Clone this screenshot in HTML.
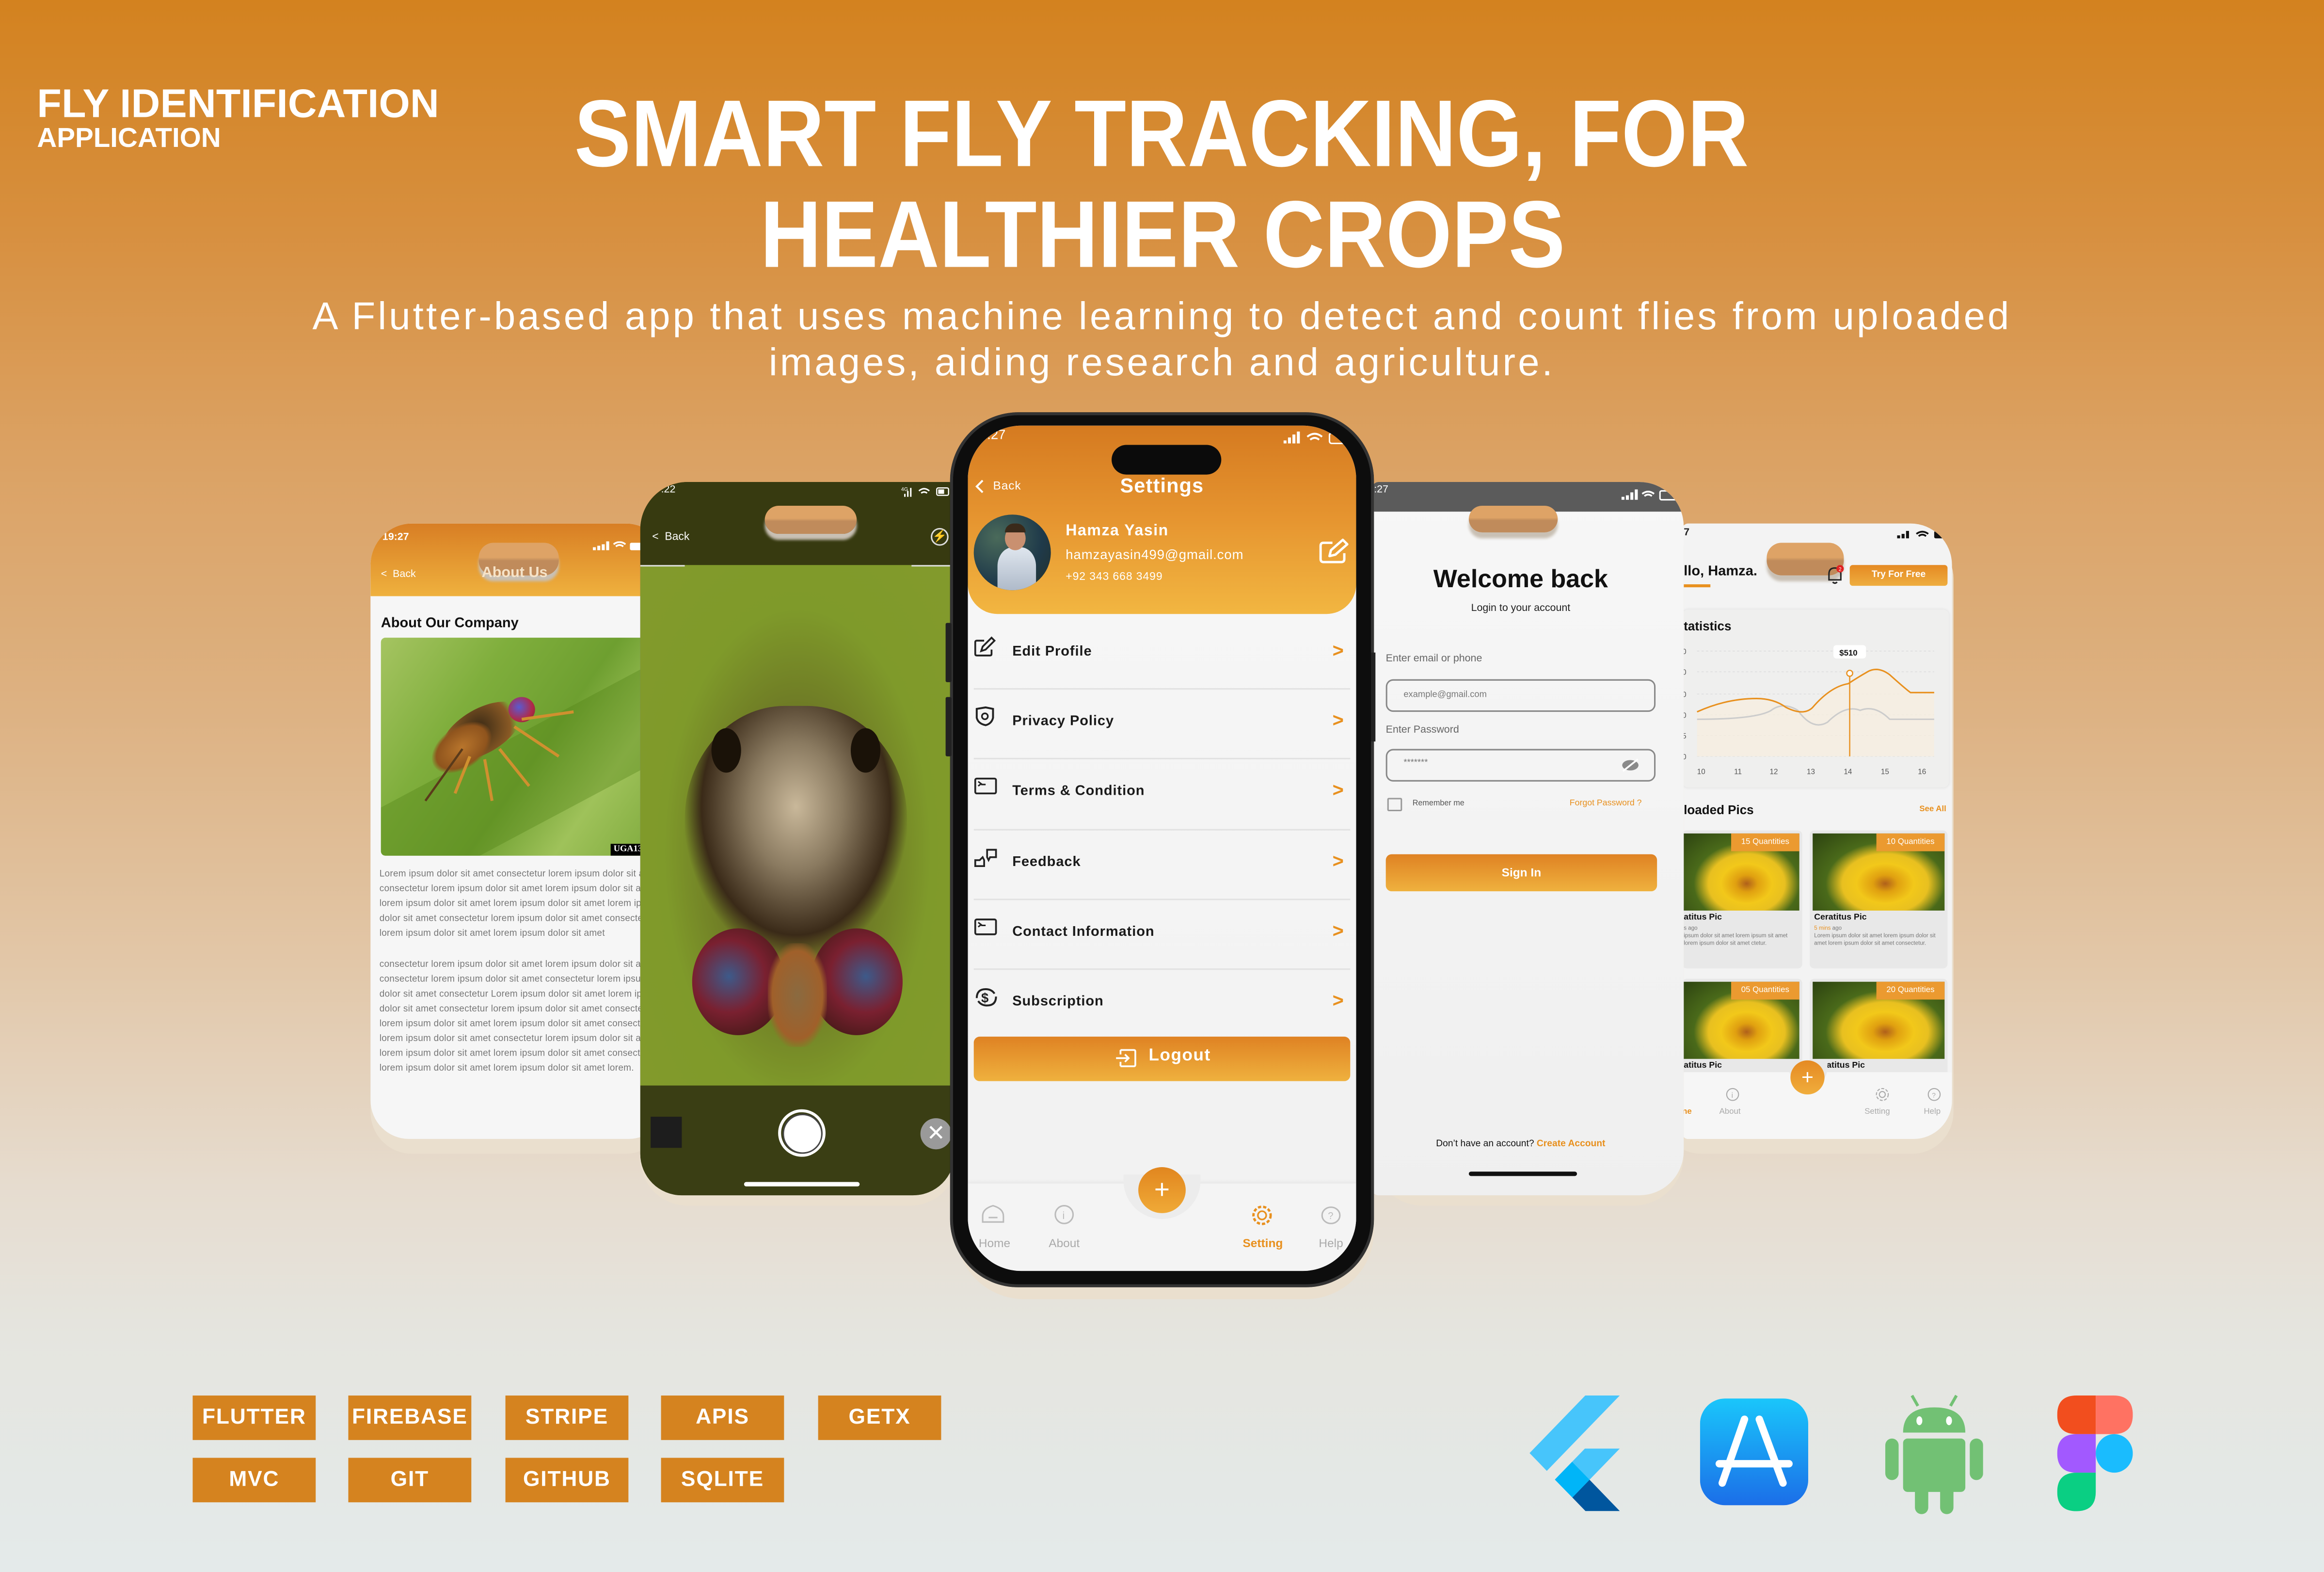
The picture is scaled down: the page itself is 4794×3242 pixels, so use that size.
<!DOCTYPE html>
<html><head><meta charset="utf-8">
<style>
*{margin:0;padding:0;box-sizing:border-box}
html,body{width:4794px;height:3242px;overflow:hidden;background:#e5e9e7}
#w{position:absolute;left:0;top:0;width:1568px;height:1060px;transform:scale(3.0574,3.0585);transform-origin:0 0;
background:linear-gradient(180deg,#d3821f 0px,#d78f3e 150px,#dba162 300px,#ddb283 480px,#e2c7a8 650px,#e6dccf 800px,#e5e5df 900px,#e4eaea 1060px);
font-family:"Liberation Sans",sans-serif;overflow:hidden}
.a{position:absolute}
.t{color:#fff;font-weight:bold;white-space:nowrap}
.badge{position:absolute;width:83px;height:30px;background:#d5831f;color:#fff;font-weight:bold;font-size:14.5px;letter-spacing:.6px;text-align:center;line-height:30px}
.row{position:absolute;left:0;width:262px;height:47px}
.row .lab{position:absolute;left:30px;top:17px;font-size:9.5px;font-weight:bold;color:#1a1a1a;letter-spacing:.3px}
.row .chev{position:absolute;left:246px;top:14px;color:#e8901e;font-size:13px;font-weight:bold}
.row .ic{position:absolute;left:4px;top:12px}
.sep{position:absolute;left:4px;width:254px;height:1px;background:#e2e2e2}
.lorem{font-size:6.2px;color:#777;line-height:10.1px;letter-spacing:.1px}
.nav{position:absolute;font-size:8px;color:#aaa;text-align:center}
.pill{position:absolute;border-radius:10px;background:linear-gradient(180deg,#dea366 0,#dea366 45%,#c08b5b 55%,#c08b5b 100%);box-shadow:0 4px 2px #c9c0b4}
</style></head><body><div id="w">

<!-- headings -->
<div class="a t" style="left:25px;top:55px;font-size:27px;letter-spacing:.1px">FLY IDENTIFICATION</div>
<div class="a t" style="left:25px;top:82px;font-size:18.5px">APPLICATION</div>
<div class="a" style="left:0;top:53px;width:1568px;text-align:center">
 <span class="t" style="display:inline-block;font-size:64px;transform:scaleX(.895);letter-spacing:0px">SMART FLY TRACKING, FOR</span></div>
<div class="a" style="left:0;top:121px;width:1568px;text-align:center">
 <span class="t" style="display:inline-block;font-size:64px;transform:scaleX(.895)">HEALTHIER CROPS</span></div>
<div class="a" style="left:0;top:198px;width:1568px;text-align:center;color:#fff;font-size:26px;line-height:31px;letter-spacing:1.7px">A Flutter-based app that uses machine learning to detect and count flies from uploaded<br>images, aiding research and agriculture.</div>

<!-- ============ About phone ============ -->
<div class="a" style="left:250px;top:362px;width:200px;height:416px;background:#eadfce;border-radius:28px"></div>
<div class="a" style="left:250px;top:353px;width:200px;height:415px;border-radius:28px 28px 26px 26px;overflow:hidden;background:#f6f6f6">
 <div class="a" style="left:0;top:0;width:200px;height:49px;background:linear-gradient(180deg,#d87e24,#efb13e)"></div>
 <div class="a t" style="left:8px;top:6px;font-size:7px">19:27</div>
 <div class="a" style="left:150px;top:6px;width:35px;height:6px"><svg width="35" height="7"><rect x="0" y="4" width="2" height="2" fill="#fff"/><rect x="3" y="3" width="2" height="3" fill="#fff"/><rect x="6" y="2" width="2" height="4" fill="#fff"/><rect x="9" y="0" width="2" height="6" fill="#fff"/><path d="M14 2 Q18 -1 22 2 M15.5 3.5 Q18 1.5 20.5 3.5" stroke="#fff" fill="none" stroke-width="1.2"/><rect x="25" y="1" width="9" height="5" rx="1" fill="#fff"/></svg></div>
 <div class="pill" style="left:73px;top:13px;width:54px;height:22px"></div>
 <div class="a t" style="left:7px;top:31px;font-size:7px;font-weight:normal">&lt;&nbsp; Back</div>
 <div class="a t" style="left:75px;top:28px;font-size:10px;color:#f6e3c8">About Us</div>
 <div class="a" style="left:7px;top:62px;font-size:9.5px;font-weight:bold;color:#111">About Our Company</div>
 <div class="a" style="left:7px;top:77px;width:190px;height:147px;border-radius:3px;overflow:hidden;background:linear-gradient(125deg,#a5c461 0%,#7fae3c 30%,#6e9f30 55%,#9fc25a 75%,#7ca83a 100%)">
  <div class="a" style="left:-20px;top:60px;width:260px;height:60px;background:rgba(80,130,20,.35);transform:rotate(-28deg)"></div>
  <div class="a" style="left:38px;top:48px;width:60px;height:30px;border-radius:50%;background:radial-gradient(circle at 50% 40%,#3a2a15,#8a5a25 60%,transparent 72%);transform:rotate(-30deg)"></div>
  <div class="a" style="left:32px;top:60px;width:45px;height:28px;border-radius:50%;background:radial-gradient(#b8752c,#8f541d 60%,transparent 72%);transform:rotate(-35deg)"></div>
  <div class="a" style="left:86px;top:40px;width:18px;height:17px;border-radius:50%;background:radial-gradient(circle at 40% 40%,#5a5ad0,#b02a4a 60%,#7a2a2a)"></div>
  <svg class="a" style="left:0;top:0" width="190" height="147"><path d="M60 80 L50 105 M70 82 L75 110 M80 75 L100 100 M95 55 L130 50 M90 60 L120 80" stroke="#d0902f" stroke-width="2" fill="none"/><path d="M30 110 L55 75" stroke="#5a3a1a" stroke-width="1.5"/></svg>
  <div class="a" style="left:155px;top:139px;width:35px;height:8px;background:#000;color:#fff;font-size:6px;font-family:'Liberation Serif',serif;font-weight:bold;padding-left:2px;line-height:8px">UGA13</div>
 </div>
 <div class="a lorem" style="left:6px;top:232px;width:192px">Lorem ipsum dolor sit amet consectetur lorem ipsum dolor sit amet consectetur lorem ipsum dolor sit amet lorem ipsum dolor sit amet lorem ipsum dolor sit amet lorem ipsum dolor sit amet lorem ipsum dolor sit amet consectetur lorem ipsum dolor sit amet consectetur lorem ipsum dolor sit amet lorem ipsum dolor sit amet<br><br>consectetur lorem ipsum dolor sit amet lorem ipsum dolor sit amet consectetur lorem ipsum dolor sit amet consectetur lorem ipsum dolor sit amet consectetur Lorem ipsum dolor sit amet lorem ipsum dolor sit amet consectetur lorem ipsum dolor sit amet consectetur lorem ipsum dolor sit amet lorem ipsum dolor sit amet consectetur lorem ipsum dolor sit amet consectetur lorem ipsum dolor sit amet lorem ipsum dolor sit amet lorem ipsum dolor sit amet consectetur lorem ipsum dolor sit amet lorem ipsum dolor sit amet lorem.</div>
</div>

<!-- ============ Camera phone ============ -->
<div class="a" style="left:432px;top:335px;width:214px;height:478px;background:#eadfce;border-radius:32px"></div>
<div class="a" style="left:432px;top:325px;width:212px;height:481px;border-radius:32px 4px 28px 28px;overflow:hidden;background:#3a3d12">
 <div class="a" style="left:0;top:0;width:212px;height:56px;background:#373a10"></div>
 <div class="a t" style="left:14px;top:2px;font-size:7px;font-weight:normal">.22</div>
 <svg class="a" style="left:176px;top:2px" width="34" height="9"><text x="0" y="4" font-size="3.5" fill="#fff" font-family="Liberation Sans">4G</text><rect x="2" y="6" width="1" height="2" fill="#fff"/><rect x="4" y="4" width="1" height="4" fill="#fff"/><rect x="6" y="2" width="1" height="6" fill="#fff"/><path d="M12 4 Q15.5 1 19 4 M13.5 5.5 Q15.5 4 17.5 5.5" stroke="#fff" fill="none" stroke-width="1"/><rect x="24" y="2" width="8" height="5" rx="1" stroke="#fff" fill="none" stroke-width=".8"/><rect x="25" y="3" width="4" height="3" fill="#fff"/></svg>
 <div class="pill" style="left:84px;top:16px;width:62px;height:19px"></div>
 <div class="a t" style="left:8px;top:32px;font-size:7.5px;font-weight:normal">&lt;&nbsp; Back</div>
 <div class="a" style="left:196px;top:31px;width:12px;height:12px;border:1px solid #ddd;border-radius:50%;color:#fff;font-size:8px;line-height:10px;text-align:center">⚡</div>
 <div class="a" style="left:0;top:56px;width:212px;height:351px;background:radial-gradient(ellipse at 50% 55%,#8a6a30 0%,#6e7a25 35%,#7f9a2a 60%,#839a2c 100%)">
  <div class="a" style="left:30px;top:95px;width:150px;height:170px;border-radius:45%;background:radial-gradient(ellipse at 50% 40%,#c9b89a 0%,#8a7a60 30%,#3a2a18 60%,transparent 72%)"></div>
  <div class="a" style="left:48px;top:110px;width:20px;height:30px;border-radius:50%;background:#1a1208"></div>
  <div class="a" style="left:142px;top:110px;width:20px;height:30px;border-radius:50%;background:#1a1208"></div>
  <div class="a" style="left:35px;top:245px;width:62px;height:72px;border-radius:50%;background:radial-gradient(circle at 40% 45%,#3d5a8a 0%,#7a2030 45%,#4a1a1a 80%)"></div>
  <div class="a" style="left:115px;top:245px;width:62px;height:72px;border-radius:50%;background:radial-gradient(circle at 60% 45%,#3d5a8a 0%,#7a2030 45%,#4a1a1a 80%)"></div>
  <div class="a" style="left:86px;top:255px;width:40px;height:70px;border-radius:40%;background:radial-gradient(#8a6a40,#a0602a 60%,transparent 75%)"></div>
  <div class="a" style="left:0;top:0;width:30px;height:1px;background:#ddd"></div><div class="a" style="left:183px;top:0;width:29px;height:1px;background:#ddd"></div>
 </div>
 <div class="a" style="left:0;top:407px;width:212px;height:74px;background:#3a3e14"></div>
 <div class="a" style="left:7px;top:428px;width:21px;height:21px;background:#1d1d1d"></div>
 <div class="a" style="left:93px;top:423px;width:32px;height:32px;border:2.5px solid #fff;border-radius:50%"></div>
 <div class="a" style="left:95.5px;top:425.5px;width:27px;height:27px;border:1px solid #444;border-radius:50%;background:#fff"></div>
 <div class="a" style="left:189px;top:429px;width:21px;height:21px;border-radius:50%;background:#9a9a9a;color:#fff;text-align:center;font-size:15px;line-height:21px">✕</div>
 <div class="a" style="left:70px;top:472px;width:78px;height:2.5px;border-radius:2px;background:#fff"></div>
</div>

<!-- ============ Dashboard phone ============ -->
<div class="a" style="left:1120px;top:362px;width:198px;height:416px;background:#eadfce;border-radius:28px"></div>
<div class="a" style="left:1135px;top:353px;width:182px;height:415px;border-radius:4px 28px 26px 4px;overflow:hidden;background:#f3f3f3">
 <div class="a t" style="left:1px;top:3px;font-size:7px;color:#222">7</div>
 <svg class="a" style="left:145px;top:4px" width="35" height="7"><rect x="0" y="4" width="2" height="2" fill="#111"/><rect x="3" y="3" width="2" height="3" fill="#111"/><rect x="6" y="1" width="2" height="5" fill="#111"/><path d="M13 3 Q17 0 21 3 M14.5 4.5 Q17 2.5 19.5 4.5" stroke="#111" fill="none" stroke-width="1.2"/><rect x="25" y="1" width="9" height="5" rx="1" fill="#111"/></svg>
 <div class="pill" style="left:57px;top:13px;width:52px;height:22px"></div>
 <div class="a" style="left:1px;top:27px;font-size:9.5px;font-weight:bold;color:#111">llo, Hamza.</div>
 <div class="a" style="left:1px;top:41px;width:18px;height:1.5px;background:#e8901e"></div>
 <svg class="a" style="left:96px;top:28px" width="14" height="14"><path d="M3 10 L3 6 Q3 2 7 2 Q11 2 11 6 L11 10 Z M5.5 11.5 Q7 13 8.5 11.5" stroke="#222" fill="none" stroke-width="1"/><circle cx="10.5" cy="2.5" r="2.5" fill="#e02020"/><text x="9.5" y="4" font-size="3.5" fill="#fff">2</text></svg>
 <div class="a" style="left:113px;top:28px;width:66px;height:14px;border-radius:2px;background:linear-gradient(#e58a23,#eead3f);color:#fff;font-size:6.3px;font-weight:bold;text-align:center;line-height:14px">Try For Free</div>
 <div class="a" style="left:0;top:58px;width:180px;height:120px;background:#efefee;border-radius:4px;box-shadow:0 0 2px #ddd"></div>
 <div class="a" style="left:1px;top:64px;font-size:8.5px;font-weight:bold;color:#111">tatistics</div>
 <svg class="a" style="left:0;top:80px" width="182" height="100">
  <g font-size="5" fill="#555" font-family="Liberation Sans"><text x="0" y="8">0</text><text x="0" y="22">0</text><text x="0" y="37">0</text><text x="0" y="51">0</text><text x="0" y="65">5</text><text x="0" y="79">0</text>
  <text x="10" y="89">10</text><text x="35" y="89">11</text><text x="59" y="89">12</text><text x="84" y="89">13</text><text x="109" y="89">14</text><text x="134" y="89">15</text><text x="159" y="89">16</text></g>
  <g stroke="#ddd" stroke-dasharray="1.5 1.5" stroke-width=".5"><line x1="10" y1="6" x2="170" y2="6"/><line x1="10" y1="20" x2="170" y2="20"/><line x1="10" y1="35" x2="170" y2="35"/><line x1="10" y1="49" x2="170" y2="49"/><line x1="10" y1="63" x2="170" y2="63"/><line x1="10" y1="77" x2="170" y2="77"/></g>
  <path d="M10 47 Q30 38 50 38 Q62 38 70 44 Q82 50 88 44 Q100 30 112 28 Q118 24 125 20 Q132 16 140 22 Q150 31 154 34 L170 34 L170 77 L10 77 Z" fill="#f6ede0" opacity=".8"/>
  <path d="M10 52 Q50 52 60 46 Q68 40 78 46 Q88 60 98 54 Q110 42 120 46 Q130 42 140 52 L170 52" stroke="#ccc" fill="none" stroke-width="1"/>
  <path d="M10 47 Q30 38 50 38 Q62 38 70 44 Q82 50 88 44 Q100 30 112 28 Q118 24 125 20 Q132 16 140 22 Q150 31 154 34 L170 34" stroke="#e8901e" fill="none" stroke-width="1"/>
  <line x1="113" y1="21" x2="113" y2="77" stroke="#e8901e" stroke-width=".8"/><circle cx="113" cy="21" r="2" fill="#fff" stroke="#e8901e" stroke-width=".8"/>
  <rect x="102" y="2" width="22" height="9" rx="2" fill="#fff"/><text x="106" y="9" font-size="5.5" font-weight="bold" fill="#111" font-family="Liberation Sans">$510</text>
 </svg>
 <div class="a" style="left:1px;top:188px;font-size:8.5px;font-weight:bold;color:#111">loaded Pics</div>
 <div class="a" style="left:160px;top:190px;font-size:5.5px;color:#e8901e;font-weight:bold">See All</div>
 <div class="a" style="left:0;top:207px;width:81px;height:93px;background:#e8e8e8;border-radius:3px"></div>
 <div class="a" style="left:86px;top:207px;width:93px;height:93px;background:#e8e8e8;border-radius:3px"></div>
 <div class="a" style="left:0;top:307px;width:81px;height:70px;background:#e8e8e8;border-radius:3px"></div>
 <div class="a" style="left:86px;top:307px;width:93px;height:70px;background:#e8e8e8;border-radius:3px"></div>
 <div class="a" style="left:0;top:209px;width:79px;height:52px;background:radial-gradient(ellipse at 55% 65%,#b0601a 0,#e0a010 12%,#f2c81a 28%,#e8c020 42%,#4a6a1a 58%,#2c4210 100%)"></div>
 <div class="a" style="left:88px;top:209px;width:89px;height:52px;background:radial-gradient(ellipse at 55% 65%,#b0601a 0,#e0a010 12%,#f2c81a 28%,#e8c020 42%,#4a6a1a 58%,#2c4210 100%)"></div>
 <div class="a" style="left:0;top:309px;width:79px;height:52px;background:radial-gradient(ellipse at 55% 65%,#b0601a 0,#e0a010 12%,#f2c81a 28%,#e8c020 42%,#4a6a1a 58%,#2c4210 100%)"></div>
 <div class="a" style="left:88px;top:309px;width:89px;height:52px;background:radial-gradient(ellipse at 55% 65%,#b0601a 0,#e0a010 12%,#f2c81a 28%,#e8c020 42%,#4a6a1a 58%,#2c4210 100%)"></div>
 <div class="a" style="left:33px;top:209px;width:46px;height:12px;background:#eb9a30;color:#fff;font-size:5.5px;text-align:center;line-height:12px">15 Quantities</div>
 <div class="a" style="left:131px;top:209px;width:46px;height:12px;background:#eb9a30;color:#fff;font-size:5.5px;text-align:center;line-height:12px">10 Quantities</div>
 <div class="a" style="left:33px;top:309px;width:46px;height:12px;background:#eb9a30;color:#fff;font-size:5.5px;text-align:center;line-height:12px">05 Quantities</div>
 <div class="a" style="left:131px;top:309px;width:46px;height:12px;background:#eb9a30;color:#fff;font-size:5.5px;text-align:center;line-height:12px">20 Quantities</div>
 <div class="a" style="left:1px;top:263px;font-size:5.8px;font-weight:bold;color:#111">atitus Pic</div>
 <div class="a" style="left:89px;top:263px;font-size:5.8px;font-weight:bold;color:#111">Ceratitus Pic</div>
 <div class="a" style="left:1px;top:271px;font-size:3.8px;color:#777;line-height:4.8px;width:78px">s ago<br>ipsum dolor sit amet lorem ipsum sit amet lorem ipsum dolor sit amet ctetur.</div>
 <div class="a" style="left:89px;top:271px;font-size:3.8px;color:#777;line-height:4.8px;width:88px"><span style="color:#e8901e">5 mins</span> ago<br>Lorem ipsum dolor sit amet lorem ipsum dolor sit amet lorem ipsum dolor sit amet consectetur.</div>
 <div class="a" style="left:1px;top:363px;font-size:5.8px;font-weight:bold;color:#111">atitus Pic</div>
 <div class="a" style="left:92px;top:363px;font-size:5.8px;font-weight:bold;color:#111">eratitus Pic</div>
 <div class="a" style="left:0;top:370px;width:182px;height:45px;background:#f6f6f6"></div>
 <div class="a" style="left:72px;top:362px;width:26px;height:18px;border-radius:0 0 13px 13px;background:#e8e8e8"></div>
 <div class="a" style="left:73px;top:362px;width:23px;height:23px;border-radius:50%;background:linear-gradient(#e58a23,#f0ad3c);color:#fff;text-align:center;font-size:14px;line-height:22px">+</div>
 <svg class="a" style="left:29px;top:380px" width="10" height="10"><circle cx="5" cy="5" r="4" stroke="#aaa" fill="none" stroke-width=".7"/><text x="4.2" y="7.2" font-size="5" fill="#aaa">i</text></svg>
 <svg class="a" style="left:130px;top:380px" width="10" height="10"><circle cx="5" cy="5" r="2" stroke="#aaa" fill="none" stroke-width=".7"/><circle cx="5" cy="5" r="4" stroke="#aaa" fill="none" stroke-width=".7" stroke-dasharray="2 1"/></svg>
 <svg class="a" style="left:165px;top:380px" width="10" height="10"><circle cx="5" cy="5" r="4" stroke="#aaa" fill="none" stroke-width=".7"/><text x="3.5" y="7" font-size="4.5" fill="#aaa">?</text></svg>
 <div class="nav" style="left:0;top:394px;font-size:5.5px;color:#e8901e;font-weight:bold">ne</div>
 <div class="nav" style="left:25px;top:394px;font-size:5.5px">About</div>
 <div class="nav" style="left:123px;top:394px;font-size:5.5px">Setting</div>
 <div class="nav" style="left:163px;top:394px;font-size:5.5px">Help</div>
</div>

<!-- ============ Login phone ============ -->
<div class="a" style="left:926px;top:335px;width:210px;height:478px;background:#eadfce;border-radius:34px"></div>
<div class="a" style="left:921px;top:330px;width:8px;height:470px;background:#1a1a1a"></div>
<div class="a" style="left:926px;top:325px;width:210px;height:481px;border-radius:4px 30px 30px 4px;overflow:hidden;background:linear-gradient(180deg,#f7f7f7,#efefef)">
 <div class="a" style="left:0;top:0;width:210px;height:20px;background:#5b5b5b"></div>
 <div class="a t" style="left:1px;top:2px;font-size:7px;font-weight:normal">:27</div>
 <svg class="a" style="left:168px;top:5px" width="42" height="8"><rect x="0" y="5" width="2" height="2" fill="#fff"/><rect x="3" y="4" width="2" height="3" fill="#fff"/><rect x="6" y="2" width="2" height="5" fill="#fff"/><rect x="9" y="0" width="2" height="7" fill="#fff"/><path d="M14 3 Q18 0 22 3 M15.5 4.5 Q18 2.5 20.5 4.5" stroke="#fff" fill="none" stroke-width="1.2"/><rect x="26" y="1" width="14" height="6" rx="1" stroke="#fff" fill="none"/></svg>
 <div class="pill" style="left:65px;top:16px;width:60px;height:18px"></div>
 <div class="a" style="left:0;top:56px;width:200px;text-align:center;font-size:17px;font-weight:bold;color:#111">Welcome back</div>
 <div class="a" style="left:0;top:82px;width:200px;text-align:center;font-size:7px;color:#222">Login to your account</div>
 <div class="a" style="left:9px;top:116px;font-size:7px;color:#666">Enter email or phone</div>
 <div class="a" style="left:9px;top:133px;width:182px;height:22px;border:1px solid #888;border-radius:5px;font-size:6px;color:#777;padding:7px 0 0 11px">example@gmail.com</div>
 <div class="a" style="left:9px;top:164px;font-size:7px;color:#666">Enter Password</div>
 <div class="a" style="left:9px;top:180px;width:182px;height:22px;border:1px solid #888;border-radius:5px;font-size:6px;color:#777;padding:6px 0 0 11px">*******</div>
 <svg class="a" style="left:167px;top:186px" width="14" height="10"><ellipse cx="7" cy="5" rx="5.5" ry="3.5" fill="#8a8a8a"/><line x1="2" y1="9" x2="12" y2="1" stroke="#fff" stroke-width="1.2"/></svg>
 <div class="a" style="left:10px;top:213px;width:10px;height:9px;border:1px solid #999;border-radius:1px"></div>
 <div class="a" style="left:27px;top:214px;font-size:5.3px;color:#555">Remember me</div>
 <div class="a" style="left:133px;top:214px;font-size:5.8px;color:#e8901e">Forgot Password ?</div>
 <div class="a" style="left:9px;top:251px;width:183px;height:25px;border-radius:4px;background:linear-gradient(180deg,#df8223,#efb13e);color:#fff;font-size:8px;font-weight:bold;text-align:center;line-height:25px">Sign In</div>
 <div class="a" style="left:0;top:443px;width:200px;text-align:center;font-size:6.3px;color:#111">Don’t have an account? <b style="color:#e8901e">Create Account</b></div>
 <div class="a" style="left:65px;top:465px;width:73px;height:2.5px;border-radius:2px;background:#111"></div>
</div>

<!-- ============ Center phone ============ -->
<div class="a" style="left:645px;top:288px;width:282px;height:588px;background:#eadfce;border-radius:46px"></div>
<div class="a" style="left:641px;top:278px;width:286px;height:590px;background:#0d0d0d;border-radius:46px;box-shadow:inset 0 0 0 2px #333"></div>
<div class="a" style="left:638px;top:420px;width:4px;height:40px;background:#222;border-radius:1px"></div>
<div class="a" style="left:638px;top:470px;width:4px;height:40px;background:#222;border-radius:1px"></div>
<div class="a" style="left:925px;top:440px;width:3px;height:60px;background:#222"></div>
<div class="a" style="left:653px;top:287px;width:262px;height:570px;border-radius:36px;overflow:hidden;background:linear-gradient(180deg,#f7f7f7,#f1f1f1)">
 <div class="a" style="left:0;top:0;width:262px;height:127px;background:linear-gradient(180deg,#d57a20 0%,#e69530 50%,#f2b641 100%);border-radius:0 0 20px 20px"></div>
 <div class="a t" style="left:13px;top:1px;font-size:9px;font-weight:normal">.27</div>
 <svg class="a" style="left:213px;top:4px" width="49" height="9"><rect x="0" y="6" width="2" height="2" fill="#fff"/><rect x="3" y="4" width="2" height="4" fill="#fff"/><rect x="6" y="2" width="2" height="6" fill="#fff"/><rect x="9" y="0" width="2" height="8" fill="#fff"/><path d="M16 3.5 Q21 -.5 26 3.5 M18 5.5 Q21 3 24 5.5" stroke="#fff" fill="none" stroke-width="1.3"/><rect x="31" y="1" width="18" height="7" rx="1.5" stroke="#fff" fill="none"/></svg>
 <div class="a" style="left:97px;top:13px;width:74px;height:20px;border-radius:10px;background:#0b0b0b"></div>
 <svg class="a" style="left:4px;top:36px" width="10" height="10"><path d="M6 1 L2 5 L6 9" stroke="#fff" fill="none" stroke-width="1.3"/></svg>
 <div class="a t" style="left:17px;top:36px;font-size:8px;font-weight:normal;letter-spacing:.3px">Back</div>
 <div class="a t" style="left:0;top:33px;width:262px;text-align:center;font-size:13.5px;letter-spacing:.4px">Settings</div>
 <div class="a" style="left:4px;top:60px;width:52px;height:51px;border-radius:50%;overflow:hidden;background:radial-gradient(circle at 30% 30%,#4a6a5a,#1f3a4a 60%,#243028)">
  <div class="a" style="left:16px;top:22px;width:26px;height:32px;border-radius:40% 40% 0 0;background:linear-gradient(#dfe6ee,#aab6c6)"></div>
  <div class="a" style="left:21px;top:8px;width:14px;height:16px;border-radius:50%;background:#c99070"></div>
  <div class="a" style="left:21px;top:6px;width:14px;height:6px;border-radius:6px 6px 0 0;background:#3a2a1a"></div>
 </div>
 <div class="a t" style="left:66px;top:65px;font-size:10.5px;letter-spacing:.5px">Hamza Yasin</div>
 <div class="a t" style="left:66px;top:82px;font-size:9px;font-weight:normal;letter-spacing:.3px">hamzayasin499@gmail.com</div>
 <div class="a t" style="left:66px;top:97px;font-size:7.5px;font-weight:normal;letter-spacing:.3px">+92 343 668 3499</div>
 <svg class="a" style="left:237px;top:76px" width="20" height="18"><path d="M9 3 L3 3 Q1 3 1 5 L1 14 Q1 16 3 16 L15 16 Q17 16 17 14 L17 10" stroke="#fff" fill="none" stroke-width="1.6"/><path d="M7 12 L8 8 L16 1 L19 4 L11 11 Z" stroke="#fff" fill="none" stroke-width="1.6" stroke-linejoin="round"/></svg>

 <div class="row" style="top:130px"><svg class="ic" width="16" height="14"><path d="M7 3 L2 3 Q1 3 1 4 L1 12 Q1 13 2 13 L11 13 Q12 13 12 12 L12 9" stroke="#222" fill="none" stroke-width="1.2"/><path d="M5 10 L6 7 L12 1 L14 3 L8 9 Z" stroke="#222" fill="none" stroke-width="1.2"/></svg><div class="lab">Edit Profile</div><div class="chev">&gt;</div></div>
 <div class="sep" style="top:177px"></div>
 <div class="row" style="top:177px"><svg class="ic" width="16" height="14"><path d="M2 2 L8 1 L13 2 L13 8 Q12 12 8 13 Q3 12 2 8 Z" stroke="#222" fill="none" stroke-width="1.3"/><circle cx="7.5" cy="7" r="2" stroke="#222" fill="none" stroke-width="1.1"/></svg><div class="lab">Privacy Policy</div><div class="chev">&gt;</div></div>
 <div class="sep" style="top:224px"></div>
 <div class="row" style="top:224px"><svg class="ic" width="16" height="14"><rect x="1" y="2" width="14" height="10" rx="1" stroke="#222" fill="none" stroke-width="1.2"/><path d="M3 4 L5 5.5 L3 7 M5 6 L8 6" stroke="#222" fill="none" stroke-width="1"/></svg><div class="lab">Terms &amp; Condition</div><div class="chev">&gt;</div></div>
 <div class="sep" style="top:272px"></div>
 <div class="row" style="top:272px"><svg class="ic" width="16" height="14"><path d="M1 13 L1 9 L4 9 L6 7 L7 9 L7 13 Z" stroke="#222" fill="none" stroke-width="1.2"/><path d="M9 2 L15 2 L15 7 L11 7 L10 9 L9 7 Z" stroke="#222" fill="none" stroke-width="1.2"/></svg><div class="lab">Feedback</div><div class="chev">&gt;</div></div>
 <div class="sep" style="top:319px"></div>
 <div class="row" style="top:319px"><svg class="ic" width="16" height="14"><rect x="1" y="2" width="14" height="10" rx="1" stroke="#222" fill="none" stroke-width="1.2"/><path d="M3 4 L5 5.5 L3 7 M5 6 L8 6" stroke="#222" fill="none" stroke-width="1"/></svg><div class="lab">Contact Information</div><div class="chev">&gt;</div></div>
 <div class="sep" style="top:366px"></div>
 <div class="row" style="top:366px"><svg class="ic" width="17" height="15"><path d="M2 8 Q2 2 8 2 Q12 2 14 5 M15 7 Q15 13 9 13 Q5 13 3 10" stroke="#222" fill="none" stroke-width="1.3"/><text x="5" y="11" font-size="9" font-weight="bold" fill="#222" font-family="Liberation Sans">$</text></svg><div class="lab">Subscription</div><div class="chev">&gt;</div></div>

 <div class="a" style="left:4px;top:412px;width:254px;height:30px;border-radius:4px;background:linear-gradient(180deg,#df8223,#efb13e)"></div>
 <svg class="a" style="left:99px;top:420px" width="15" height="13"><path d="M4 1 L13 1 Q14 1 14 2 L14 11 Q14 12 13 12 L4 12 M4 4 L4 1 M4 9 L4 12" stroke="#fff" fill="none" stroke-width="1.2"/><path d="M1 6.5 L9 6.5 M7 4 L9.5 6.5 L7 9" stroke="#fff" fill="none" stroke-width="1.2"/></svg>
 <div class="a t" style="left:122px;top:419px;font-size:11.5px;letter-spacing:.5px">Logout</div>

 <div class="a" style="left:0;top:511px;width:262px;height:59px;background:#f4f4f4;box-shadow:0 -1px 2px #e5e5e5"></div>
 <div class="a" style="left:105px;top:505px;width:52px;height:30px;border-radius:0 0 26px 26px;background:#ececec"></div>
 <div class="a" style="left:115px;top:500px;width:32px;height:31px;border-radius:50%;background:linear-gradient(180deg,#e1861f,#f0aa37);color:#fff;font-size:18px;text-align:center;line-height:30px">+</div>
 <svg class="a" style="left:9px;top:525px" width="16" height="14"><path d="M1 8 Q1 3 8 1 Q15 3 15 8 L15 12 L1 12 Z" stroke="#bbb" fill="none" stroke-width="1"/><line x1="5" y1="9" x2="11" y2="9" stroke="#bbb"/></svg>
 <svg class="a" style="left:58px;top:525px" width="14" height="14"><circle cx="7" cy="7" r="6" stroke="#bbb" fill="none" stroke-width="1"/><text x="5.8" y="10" font-size="7" fill="#bbb" font-family="Liberation Sans">i</text></svg>
 <svg class="a" style="left:191px;top:525px" width="15" height="15"><circle cx="7.5" cy="7.5" r="2.8" stroke="#e8901e" fill="none" stroke-width="1.1"/><circle cx="7.5" cy="7.5" r="5.8" stroke="#e8901e" fill="none" stroke-width="1.6" stroke-dasharray="2.2 1.3"/></svg>
 <svg class="a" style="left:238px;top:526px" width="14" height="13"><ellipse cx="7" cy="6.5" rx="6" ry="5.5" stroke="#bbb" fill="none" stroke-width="1"/><text x="5" y="9" font-size="6.5" fill="#bbb" font-family="Liberation Sans">?</text></svg>
 <div class="nav" style="left:3px;top:547px;width:30px">Home</div>
 <div class="nav" style="left:50px;top:547px;width:30px">About</div>
 <div class="nav" style="left:179px;top:547px;width:40px;color:#e8901e;font-weight:bold">Setting</div>
 <div class="nav" style="left:230px;top:547px;width:30px">Help</div>
</div>

<!-- badges -->
<div class="badge" style="left:130px;top:941px">FLUTTER</div>
<div class="badge" style="left:235px;top:941px">FIREBASE</div>
<div class="badge" style="left:341px;top:941px">STRIPE</div>
<div class="badge" style="left:446px;top:941px">APIS</div>
<div class="badge" style="left:552px;top:941px">GETX</div>
<div class="badge" style="left:130px;top:983px">MVC</div>
<div class="badge" style="left:235px;top:983px">GIT</div>
<div class="badge" style="left:341px;top:983px">GITHUB</div>
<div class="badge" style="left:446px;top:983px">SQLITE</div>

<!-- logos -->
<svg class="a" style="left:1032px;top:941px" width="61" height="78" viewBox="0 0 256 317" preserveAspectRatio="none">
 <path d="M157.7 0 L0 157.7 L48.8 206.5 L255.3 0 Z" fill="#47C5FB"/>
 <path d="M156.6 145.4 L72.1 229.8 L121.1 279.5 L169.8 230.8 L255.3 145.4 Z" fill="#47C5FB"/>
 <path d="M121.1 279.5 L158.2 316.6 L255.3 316.6 L169.8 230.8 Z" fill="#00569E"/>
 <path d="M71.6 230.4 L120.4 181.6 L169.8 230.8 L121.1 279.5 Z" fill="#00B5F8"/>
</svg>
<svg class="a" style="left:1147px;top:943px" width="73" height="72" viewBox="0 0 73 72">
 <defs><linearGradient id="as" x1="0" y1="0" x2="0" y2="1"><stop offset="0" stop-color="#1ac6fb"/><stop offset="1" stop-color="#1b6ee8"/></linearGradient></defs>
 <rect x="0" y="0" width="73" height="72" rx="17" fill="url(#as)"/>
 <g stroke="#fff" stroke-width="5" stroke-linecap="round" fill="none">
  <line x1="30" y1="14" x2="15" y2="57"/><line x1="40" y1="14" x2="56" y2="57"/><line x1="13" y1="44" x2="60" y2="44"/>
 </g>
</svg>
<svg class="a" style="left:1272px;top:940px" width="66" height="81" viewBox="0 0 66 81">
 <g fill="#72c174">
  <line x1="22" y1="8" x2="18" y2="1" stroke="#72c174" stroke-width="2"/><line x1="44" y1="8" x2="48" y2="1" stroke="#72c174" stroke-width="2"/>
  <path d="M12 26 Q12 9 33 9 Q54 9 54 26 Z"/>
  <rect x="12" y="30" width="42" height="36" rx="3"/>
  <rect x="0" y="30" width="9" height="28" rx="4.5"/><rect x="57" y="30" width="9" height="28" rx="4.5"/>
  <rect x="20" y="60" width="9" height="21" rx="4.5"/><rect x="37" y="60" width="9" height="21" rx="4.5"/>
 </g>
 <ellipse cx="23" cy="18" rx="2" ry="3" fill="#fff"/><ellipse cx="43" cy="18" rx="2" ry="3" fill="#fff"/>
</svg>
<svg class="a" style="left:1388px;top:941px" width="51" height="78" viewBox="0 0 51 78">
 <path d="M0 13 Q0 0 13 0 L26 0 L26 26 L13 26 Q0 26 0 13Z" fill="#f24e1e"/>
 <path d="M26 0 L38 0 Q51 0 51 13 Q51 26 38 26 L26 26Z" fill="#ff7262"/>
 <path d="M0 39 Q0 26 13 26 L26 26 L26 52 L13 52 Q0 52 0 39Z" fill="#a259ff"/>
 <ellipse cx="38.5" cy="39" rx="12.5" ry="13" fill="#1abcfe"/>
 <path d="M0 65 Q0 52 13 52 L26 52 L26 65 Q26 78 13 78 Q0 78 0 65Z" fill="#0acf83"/>
</svg>

</div></body></html>
